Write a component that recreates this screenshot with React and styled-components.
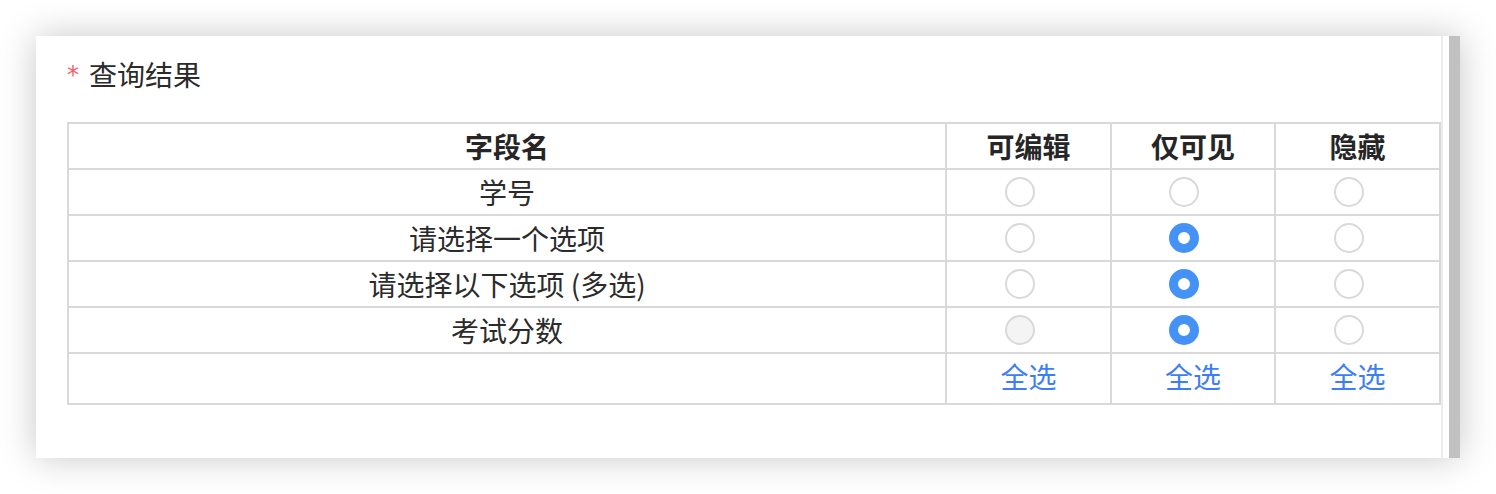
import React from "react";
import styled, { createGlobalStyle } from "styled-components";

const Global = createGlobalStyle`
  html, body { margin: 0; padding: 0; background: #fff; }
  body { font-family: "Noto Sans CJK SC", "Noto Sans", sans-serif; color: #262626; }
`;

const Page = styled.div`
  padding: 36px 36px 0 36px;
  height: 494px;
  box-sizing: border-box;
`;

const Panel = styled.div`
  width: 1424px;
  height: 422px;
  display: flex;
  background: #fff;
  box-shadow: 0 0 34px rgba(0, 0, 0, 0.22);
`;

const Content = styled.div`
  flex: 1;
  min-width: 0;
  padding: 18px 0 0 31px;
  box-sizing: border-box;
`;

const Scrollbar = styled.div`
  width: 19px;
  box-sizing: border-box;
  border-left: 2px solid #ececec;
  padding-left: 6px;
  display: flex;
`;

const Thumb = styled.div`
  flex: 1;
  background: #c1c1c1;
`;

const Title = styled.div`
  display: flex;
  align-items: center;
  height: 40px;
  font-size: 28px;
  color: #2b2b2b;
  margin-bottom: 28px;
`;

const Required = styled.span`
  color: #f2606b;
  font-size: 24px;
  margin-right: 10px;
  font-family: "DejaVu Sans", sans-serif;
  position: relative;
  top: 1px;
`;

const Table = styled.table`
  border-collapse: collapse;
  table-layout: fixed;
  width: 1372px;
  border: 2px solid #d9d9d9;
`;

const Th = styled.th`
  border: 2px solid #d9d9d9;
  height: 44px;
  padding: 0;
  font-size: 28px;
  font-weight: 700;
  color: #262626;
  text-align: center;
  vertical-align: middle;
`;

const Td = styled.td`
  border: 2px solid #d9d9d9;
  height: ${(p) => (p.$tall ? "49px" : "44px")};
  padding: 0;
  font-size: ${(p) => (p.$radio ? "0" : "28px")};
  line-height: ${(p) => (p.$radio ? "0" : "normal")};
  color: #2b2b2b;
  text-align: center;
  vertical-align: middle;
`;

const RadioWrap = styled.span`
  display: inline-flex;
  vertical-align: top;
  margin-right: 18px;
`;

const RadioCircle = styled.span`
  width: 30px;
  height: 30px;
  box-sizing: border-box;
  border-radius: 50%;
  border: ${(p) => (p.$checked ? "9px solid #4592f6" : "2px solid #d9d9d9")};
  background: ${(p) => (p.$checked ? "#fff" : p.$disabled ? "#f4f4f4" : "#fff")};
`;

const Link = styled.a`
  color: #3b7ef6;
  font-size: 28px;
  text-decoration: none;
  cursor: pointer;
  position: relative;
  top: -3px;
`;

const Radio = ({ checked, disabled }) => (
  <RadioWrap>
    <RadioCircle $checked={checked} $disabled={disabled} />
  </RadioWrap>
);

const rows = [
  { name: "学号", value: null },
  { name: "请选择一个选项", value: 1 },
  { name: "请选择以下选项 (多选)", value: 1 },
  { name: "考试分数", value: 1, disabled: [0] },
];

export default function App() {
  return (
    <>
      <Global />
      <Page>
        <Panel>
          <Content>
            <Title>
              <Required>*</Required>
              查询结果
            </Title>
            <Table>
              <colgroup>
                <col style={{ width: 878 }} />
                <col style={{ width: 165 }} />
                <col style={{ width: 164 }} />
                <col style={{ width: 165 }} />
              </colgroup>
              <thead>
                <tr>
                  <Th>字段名</Th>
                  <Th>可编辑</Th>
                  <Th>仅可见</Th>
                  <Th>隐藏</Th>
                </tr>
              </thead>
              <tbody>
                {rows.map((r) => (
                  <tr key={r.name}>
                    <Td>{r.name}</Td>
                    {[0, 1, 2].map((i) => (
                      <Td key={i} $radio>
                        <Radio
                          checked={r.value === i}
                          disabled={r.disabled && r.disabled.includes(i)}
                        />
                      </Td>
                    ))}
                  </tr>
                ))}
                <tr>
                  <Td $tall />
                  <Td $tall><Link>全选</Link></Td>
                  <Td $tall><Link>全选</Link></Td>
                  <Td $tall><Link>全选</Link></Td>
                </tr>
              </tbody>
            </Table>
          </Content>
          <Scrollbar>
            <Thumb />
          </Scrollbar>
        </Panel>
      </Page>
    </>
  );
}
